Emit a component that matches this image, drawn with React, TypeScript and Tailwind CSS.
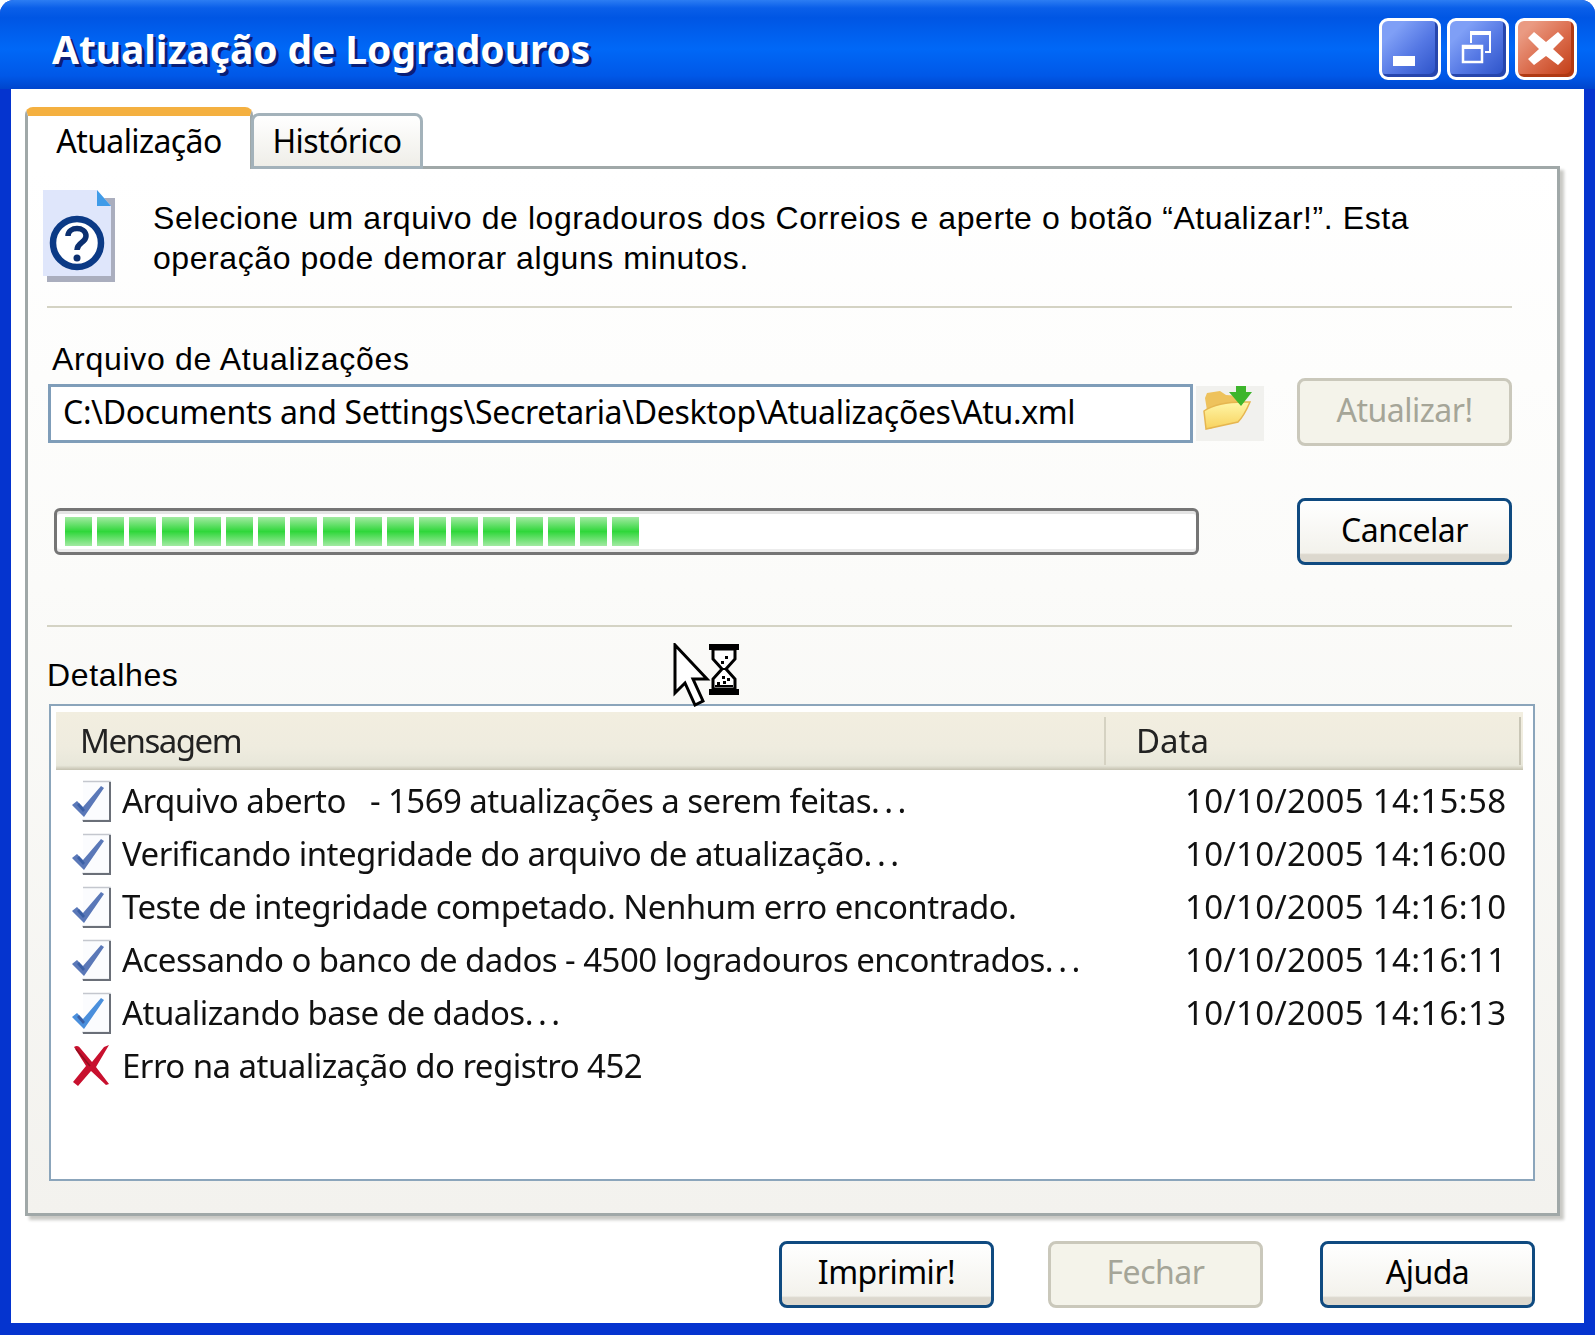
import React from 'react';

const rows = [
  { msg: 'Arquivo aberto   - 1569 atualizações a serem feitas', dots: true, date: '10/10/2005 14:15:58', tone: '#5a78b8' },
  { msg: 'Verificando integridade do arquivo de atualização', dots: true, date: '10/10/2005 14:16:00', tone: '#5a78b8' },
  { msg: 'Teste de integridade competado. Nenhum erro encontrado.', dots: false, date: '10/10/2005 14:16:10', tone: '#5a78b8' },
  { msg: 'Acessando o banco de dados - 4500 logradouros encontrados', dots: true, date: '10/10/2005 14:16:11', tone: '#5a78b8' },
  { msg: 'Atualizando base de dados', dots: true, date: '10/10/2005 14:16:13', tone: '#4a8fdc' },
  { msg: 'Erro na atualização do registro 452', dots: false, date: '', tone: '' },
];

const chunks = Array.from({ length: 18 }, (_, i) => i);

const CheckIcon = ({ tone }: { tone: string }) => (
  <svg width="42" height="44" viewBox="0 0 42 44" className="shrink-0">
    <path d="M12 3H38V41H12" fill="#fbfcfe" />
    <path d="M12 2.5H39V41.5H11" fill="none" stroke="#c4c7ce" strokeWidth="1.5" />
    <path d="M39 3V42H12" fill="none" stroke="#6a6f78" strokeWidth="2" />
    <path d="M1 26L6 22L12 28L30 7L33 9L13 38Z" fill={tone} />
    <path d="M6 26L12 33L14 31L8 24Z" fill="#3a5fa5" />
  </svg>
);

const ErrorIcon = () => (
  <svg width="42" height="44" viewBox="0 0 42 44" className="shrink-0">
    <path d="M3 3C6 1 8 2 10 5L21 18L33 3L38 1L25 23L38 40L35 41L20 27L7 42L2 38L15 22Z" fill="#c8102e" />
    <path d="M5 5L19 22" stroke="#8f1020" strokeWidth="1.5" />
  </svg>
);

const QuestionDoc = () => (
  <svg width="72" height="92" viewBox="0 0 72 92" className="shrink-0 blur-[0.7px]">
    <rect x="4" y="8" width="68" height="84" fill="#8d93a8" opacity="0.75" />
    <path d="M0 0H54L68 16V86H0Z" fill="#dfe6fb" />
    <path d="M54 0L68 16H54Z" fill="#3f9be8" />
    <circle cx="34" cy="53" r="24" fill="#ffffff" stroke="#0b3a86" strokeWidth="6.5" />
    <path d="M25 46C25 36 43 36 43 46C43 53 34 52 34 60" fill="none" stroke="#0b2f70" strokeWidth="5.5" />
    <circle cx="34" cy="68" r="3.5" fill="#0b2f70" />
  </svg>
);

const FolderIcon = () => (
  <svg width="68" height="55" viewBox="0 0 68 55" className="blur-[0.5px]">
    <defs>
      <linearGradient id="folderFront" x1="0" y1="0" x2="0" y2="1">
        <stop offset="0" stopColor="#fff6a8" />
        <stop offset="1" stopColor="#f8d25e" />
      </linearGradient>
    </defs>
    <path d="M9 12L11 7L24 5L30 9L44 10L46 30L14 43Z" fill="#eec25c" />
    <path d="M10 43L8 25Q22 15 54 16Q48 30 42 36Z" fill="url(#folderFront)" stroke="#e6b650" strokeWidth="1.5" />
    <path d="M40 0H50V6H56L45 20L33 6H40Z" fill="#3db52c" />
  </svg>
);

const BusyCursor = () => (
  <svg width="68" height="64" viewBox="0 0 68 64" className="block">
    <path d="M2 2L34 36H20L30 58L22 62L12 40L2 50Z" fill="#ffffff" stroke="#000000" strokeWidth="3" strokeLinejoin="miter" />
    <path d="M40 6V16L49 26L40 36V46H62V36L53 26L62 16V6Z" fill="#ffffff" stroke="#000000" strokeWidth="3" />
    <rect x="36" y="1" width="30" height="6" fill="#000000" />
    <rect x="36" y="46" width="30" height="6" fill="#000000" />
    <path d="M52 13h3v3h-3zM48 18h3v3h-3zM50 25h2v2h-2zM49 33h3v3h-3zM54 35h3v3h-3zM44 39h3v3h-3zM50 38h3v3h-3zM42 42h18v2H42z" fill="#000000" />
  </svg>
);

const XpButton = ({ label, disabled, className }: { label: string; disabled?: boolean; className?: string }) => (
  <button
    className={
      disabled
        ? `w-[215px] h-[67px] pb-[4px] rounded-[8px] border-[3px] border-[#cac8bb] bg-[#f4f3ea] text-[#a5a598] text-[32px] tracking-[-0.5px] ${className ?? ''}`
        : `w-[215px] h-[67px] pb-[4px] rounded-[8px] border-[3px] border-[#0f4a80] bg-[linear-gradient(180deg,#ffffff_0%,#f3f2ec_85%,#dcd8ce_88%,#dcd8ce_100%)] text-black text-[32px] tracking-[-0.5px] ${className ?? ''}`
    }
  >
    {label}
  </button>
);

export default function App() {
  return (
    <div className="relative w-[1595px] h-[1335px] flex flex-col overflow-hidden rounded-t-[14px] bg-[#0534cf] font-['Noto_Sans',sans-serif] text-black">
      {/* Title bar */}
      <div className="h-[89px] shrink-0 flex items-center justify-between pl-[52px] pr-[18px] pt-[8px] bg-[linear-gradient(180deg,#2c7df3_0%,#0a5fe9_9%,#0056e4_20%,#0068f7_55%,#0058e8_85%,#0045cc_100%)]">
        <h1 className="mt-[2px] text-[39px] tracking-[-0.08px] font-bold text-white [text-shadow:3px_3px_0_#0a1f78]">Atualização de Logradouros</h1>
        <div className="flex gap-[6px]">
          <div className="w-[62px] h-[62px] rounded-[9px] border-[3px] border-white bg-[linear-gradient(135deg,#7f9ff6_20%,#5578e4_55%,#2a50c6_100%)] shadow-[inset_-3px_-3px_0_#2746ad]">
            <svg width="56" height="56" viewBox="0 0 56 56">
              <rect x="11" y="35" width="22" height="10" fill="#ffffff" />
            </svg>
          </div>
          <div className="w-[62px] h-[62px] rounded-[9px] border-[3px] border-white bg-[linear-gradient(135deg,#7f9ff6_20%,#5578e4_55%,#2a50c6_100%)] shadow-[inset_-3px_-3px_0_#2746ad]">
            <svg width="56" height="56" viewBox="0 0 56 56">
              <path d="M21 22V12H40V31H35" fill="none" stroke="#ffffff" strokeWidth="2" />
              <rect x="20" y="10" width="21" height="4" fill="#ffffff" />
              <rect x="13" y="25" width="19" height="16" fill="none" stroke="#ffffff" strokeWidth="2.5" />
              <rect x="12" y="24" width="21" height="4" fill="#ffffff" />
            </svg>
          </div>
          <div className="w-[62px] h-[62px] rounded-[9px] border-[3px] border-white bg-[linear-gradient(135deg,#ea9a82_15%,#da6a4a_55%,#c03a12_100%)] shadow-[inset_-3px_-3px_0_#b03a14]">
            <svg width="56" height="56" viewBox="0 0 56 56">
              <path d="M16 11L28 21L40 11L46 17L35 28L46 38L40 44L28 35L16 44L10 38L21 28L10 17Z" fill="#ffffff" />
            </svg>
          </div>
        </div>
      </div>

      {/* Window body */}
      <div className="flex-1 mx-[11px] mb-[12px] bg-white flex flex-col pt-[18px]">
        {/* Tabs */}
        <div className="flex items-end h-[62px] ml-[14px] -mb-[3px] relative z-10">
          <div className="w-[228px] h-[62px] pb-[4px] rounded-t-[8px] bg-white border-x-[3px] border-[#a0a8a8] border-t-[9px] border-t-[#f4b040] flex items-center justify-center text-[32px] tracking-[-0.6px]">
            Atualização
          </div>
          <div className="-ml-[2px] w-[172px] h-[56px] rounded-t-[8px] bg-[linear-gradient(180deg,#ffffff,#efeee8)] border-[3px] border-[#a3b2ba] flex items-center justify-center text-[32px] tracking-[-0.6px]">
            Histórico
          </div>
        </div>

        {/* Panel */}
        <div className="box-border h-[1050px] ml-[14px] mr-[24px] border-[3px] border-[#a0a8a8] bg-[linear-gradient(180deg,#ffffff_0%,#fbfbf9_40%,#f3f2ee_100%)] shadow-[4px_4px_3px_#c9c9c5]">
          <div className="flex pl-[15px] pt-[21px] gap-[38px]">
            <QuestionDoc />
            <p className="pt-[8px] text-[32px] leading-[40px] font-['Liberation_Sans',sans-serif] tracking-[0.575px]">
              Selecione um arquivo de logradouros dos Correios e aperte o botão “Atualizar!”. Esta
              <br />
              operação pode demorar alguns minutos.
            </p>
          </div>
          <div className="h-[2px] w-[1465px] ml-[19px] mt-[24px] bg-[#d4d3c4]" />

          <div className="mt-[31px] ml-[24px] h-[39px] text-[32px] leading-[40px] font-['Liberation_Sans',sans-serif] tracking-[0.7px]">
            Arquivo de Atualizações
          </div>
          <div className="flex items-start ml-[20px]">
            <div className="mt-[6px] box-border w-[1145px] h-[59px] border-[3px] border-[#7f9db9] bg-white pl-[12px] pb-[4px] flex items-center text-[32px] tracking-[-0.34px] whitespace-nowrap">
              C:\Documents and Settings\Secretaria\Desktop\Atualizações\Atu.xml
            </div>
            <div className="mt-[8px] ml-[3px] w-[68px] h-[55px] bg-[#f1f1ee]">
              <FolderIcon />
            </div>
            <XpButton label="Atualizar!" disabled className="ml-[33px] h-[68px]" />
          </div>

          <div className="flex items-start mt-[52px] ml-[26px]">
            <div className="mt-[10px] box-border w-[1145px] h-[47px] rounded-[6px] border-[3px] border-[#757575] bg-white shadow-[inset_0_3px_0_#e4e4e4,inset_0_-3px_0_#ececec] flex items-center gap-[5.2px] pl-[8px]">
              {chunks.map((c) => (
                <div key={c} className="w-[27px] h-[29px] bg-[linear-gradient(180deg,#a2eaa2_0%,#2fd73a_50%,#a2eaa2_100%)]" />
              ))}
            </div>
            <XpButton label="Cancelar" className="ml-[98px]" />
          </div>

          <div className="h-[2px] w-[1465px] ml-[19px] mt-[60px] bg-[#d4d3c4]" />

          <div className="mt-[28px] ml-[19px] h-[40px] text-[32px] leading-[40px] font-['Liberation_Sans',sans-serif] tracking-[0.65px]">
            Detalhes
          </div>

          {/* Details table */}
          <div className="box-border mt-[9px] ml-[21px] w-[1486px] h-[477px] border-2 border-[#8ba5bb] bg-white pt-[6px] px-[5px]">
            <div className="mr-[5px] h-[58px] flex items-center text-[33px] text-[#222] bg-[linear-gradient(180deg,#f2eee0_0%,#efecdf_60%,#e8e7da_92%,#c4c1b0_100%)] blur-[0.4px]">
              <div className="w-[1050px] pl-[24px] border-r-2 border-[#d5d2c2] h-[48px] flex items-center tracking-[-1.5px]">Mensagem</div>
              <div className="flex-1 pl-[30px] border-r-2 border-[#c9c6b6] h-[48px] mr-[2px] flex items-center">Data</div>
            </div>
            <div className="mt-[4px] -ml-[5px] -mr-[5px]">
              {rows.map((r) => (
                <div key={r.msg} className="grid grid-cols-[1134px_1fr] h-[53px] items-center text-[33px] text-[#111] whitespace-pre blur-[0.4px]">
                  <div className="flex items-center gap-[9px] pl-[20px]">
                    {r.tone ? <CheckIcon tone={r.tone} /> : <ErrorIcon />}
                    <span className="tracking-[-0.55px]">
                      {r.msg}
                      {r.dots && <span className="tracking-[4.5px]">...</span>}
                    </span>
                  </div>
                  <span className="tracking-[0.33px]">{r.date}</span>
                </div>
              ))}
            </div>
          </div>
        </div>

        {/* Footer buttons */}
        <div className="flex justify-end pr-[49px] mt-[25px]">
          <XpButton label="Imprimir!" className="pb-[6px]" />
          <XpButton label="Fechar" disabled className="ml-[54px] pb-[6px]" />
          <XpButton label="Ajuda" className="ml-[57px] pb-[6px]" />
        </div>
      </div>

      {/* Busy cursor */}
      <div className="absolute left-[673px] top-[643px]">
        <BusyCursor />
      </div>
    </div>
  );
}
